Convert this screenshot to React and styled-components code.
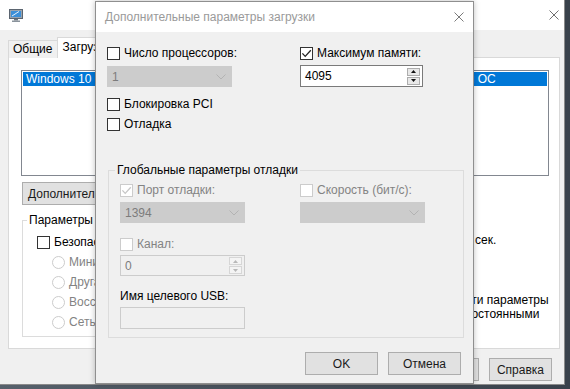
import React from "react";
import styled, { createGlobalStyle } from "styled-components";

const GlobalStyle = createGlobalStyle`
    html, body {
        margin: 0;
        padding: 0;
    }

    body {
        background: #3d454f;
        color: #000;
        font-family: "Liberation Sans", Arial, sans-serif;
        font-size: 12px;
    }
`;

const Desktop = styled.div`
    background: linear-gradient(90deg, #56606b, #39414b);
    height: 389px;
    overflow: hidden;
    position: relative;
    width: 570px;
`;

/* ---------- shared controls ---------- */

const Box = styled.span`
    align-items: center;
    background: #fff;
    border: 1px solid ${props => (props.$disabled ? "#cccccc" : "#333333")};
    box-sizing: border-box;
    display: inline-flex;
    flex: none;
    height: 13px;
    justify-content: center;
    width: 13px;
`;

const CheckRow = styled.label`
    align-items: center;
    color: ${props => (props.$disabled ? "#838383" : "#000")};
    display: flex;
    gap: 4px;
    height: 13px;
    line-height: 13px;
    margin-top: ${props => props.$top || 0}px;
    white-space: nowrap;
`;

const Checkbox = ({ checked, disabled, top, children }) => (
    <CheckRow $disabled={disabled} $top={top}>
        <Box $disabled={disabled}>
            {checked && (
                <svg width="11" height="11" viewBox="0 0 11 11">
                    <path
                        d="M1.4 5.4 L4.2 8.4 L9.8 2.2"
                        fill="none"
                        stroke={disabled ? "#c6c6c6" : "#222"}
                        strokeWidth="1.3"
                    />
                </svg>
            )}
        </Box>
        <span>{children}</span>
    </CheckRow>
);

const RadioCircle = styled.span`
    background: #fff;
    border: 1px solid #cccccc;
    border-radius: 50%;
    box-sizing: border-box;
    flex: none;
    height: 13px;
    width: 13px;
`;

const Radio = ({ children }) => (
    <CheckRow $disabled>
        <RadioCircle />
        <span>{children}</span>
    </CheckRow>
);

const Select = styled.div`
    align-items: center;
    background: #cccccc;
    border: 1px solid #cccccc;
    box-sizing: border-box;
    color: #7c7c7c;
    display: flex;
    height: 21px;
    justify-content: space-between;
    margin-top: ${props => props.$top || 0}px;
    padding: 0 5px 0 4px;
    width: 125px;
`;

const Chevron = () => (
    <svg width="10" height="6" viewBox="0 0 10 6">
        <path d="M0.5 0.5 L5 5 L9.5 0.5" fill="none" stroke="#b3b3b3" strokeWidth="1" />
    </svg>
);

const Field = styled.div`
    align-items: center;
    background: ${props => (props.$disabled ? "#f0f0f0" : "#fff")};
    border: 1px solid ${props => (props.$disabled ? "#cccccc" : "#7a7a7a")};
    box-sizing: border-box;
    color: ${props => (props.$disabled ? "#7c7c7c" : "#000")};
    display: flex;
    flex: none;
    height: ${props => props.$height || 21}px;
    justify-content: space-between;
    margin-top: ${props => props.$top || 0}px;
    padding: 0 2px 0 4px;
    width: ${props => props.$width || 125}px;
`;

const Spinner = styled.div`
    display: flex;
    flex-direction: column;
    gap: 1px;
`;

const SpinButton = styled.span`
    align-items: center;
    background: ${props => (props.$disabled ? "#f4f4f4" : "#e8e8e8")};
    border: 1px solid ${props => (props.$disabled ? "#d6d6d6" : "#adadad")};
    box-sizing: border-box;
    display: flex;
    height: 8px;
    justify-content: center;
    width: 13px;
`;

const Arrow = ({ up, disabled }) => (
    <svg width="5" height="3" viewBox="0 0 5 3">
        <path d={up ? "M0 3 L2.5 0 L5 3 Z" : "M0 0 L2.5 3 L5 0 Z"} fill={disabled ? "#b8b8b8" : "#111"} />
    </svg>
);

const SpinField = ({ value, disabled, top, width, height }) => (
    <Field $disabled={disabled} $top={top} $width={width} $height={height}>
        <span>{value}</span>
        <Spinner>
            <SpinButton $disabled={disabled}>
                <Arrow up disabled={disabled} />
            </SpinButton>
            <SpinButton $disabled={disabled}>
                <Arrow disabled={disabled} />
            </SpinButton>
        </Spinner>
    </Field>
);

const Button = styled.button`
    background: #e1e1e1;
    border: 1px solid #adadad;
    box-sizing: border-box;
    color: #1a1a1a;
    font: inherit;
    height: 23px;
    padding: 0 5px;
    width: ${props => (props.$width ? `${props.$width}px` : "auto")};
`;

const CloseIcon = ({ color = "#7a7a7a" }) => (
    <svg width="10" height="10" viewBox="0 0 10 10">
        <path d="M0.5 0.5 L9.5 9.5 M9.5 0.5 L0.5 9.5" stroke={color} strokeWidth="1" />
    </svg>
);

const GroupBox = styled.fieldset`
    border: 1px solid #dcdcdc;
    box-sizing: border-box;
    flex: none;
    margin: ${props => props.$margin || 0};
    min-width: 0;
    padding: ${props => props.$padding || "0 11px 8px"};
    width: ${props => props.$width}px;
`;

const Legend = styled.legend`
    line-height: 15px;
    margin-left: ${props => props.$shift || -5}px;
    padding: 0 2px;
`;

/* ---------- background window: msconfig ---------- */

const BackWindow = styled.div`
    background: #f0f0f0;
    border-bottom: 1px solid #8a8a8a;
    border-right: 1px solid #8a8a8a;
    box-sizing: border-box;
    display: flex;
    flex-direction: column;
    height: 385px;
    width: 565px;
`;

const BackTitle = styled.div`
    align-items: center;
    background: #fff;
    display: flex;
    flex: none;
    height: 30px;
    justify-content: space-between;
    padding: 0 5px 0 9px;
`;

const BackBody = styled.div`
    padding: 7px 0 0 8px;
`;

const Tabs = styled.div`
    align-items: flex-end;
    display: flex;
    height: 21px;
    margin-bottom: -1px;
    position: relative;
    z-index: 1;
`;

const Tab = styled.div`
    background: ${props => (props.$active ? "#fff" : "#f0f0f0")};
    border: 1px solid #d9d9d9;
    border-bottom: none;
    box-sizing: border-box;
    height: ${props => (props.$active ? 21 : 18)}px;
    line-height: ${props => (props.$active ? 19 : 17)}px;
    margin-left: ${props => (props.$active ? -1 : 0)}px;
    padding: 0 5px 0 4px;
`;

const TabPanel = styled.div`
    background: #fff;
    border: 1px solid #d9d9d9;
    box-sizing: border-box;
    height: 292px;
    padding: 12px 0 0 12px;
    width: 552px;
`;

const ListBox = styled.div`
    border: 1px solid #828790;
    box-sizing: border-box;
    height: 106px;
    padding: 1px;
    width: 528px;
`;

const ListRow = styled.div`
    background: #0078d7;
    color: #fff;
    height: 14px;
    line-height: 14px;
    overflow: hidden;
    padding-left: 3px;
    white-space: nowrap;
`;

const AdvancedRow = styled.div`
    margin: 6px 0 0 1px;
`;

const LowerArea = styled.div`
    display: flex;
`;

const GroupList = styled.div`
    display: flex;
    flex-direction: column;
    gap: 7px;
    padding-top: 8px;
`;

const RadioList = styled.div`
    display: flex;
    flex-direction: column;
    gap: 7px;
    padding: 0 0 1px 15px;
`;

const Timeout = styled.div`
    display: flex;
    flex: none;
    flex-direction: column;
    margin-left: 78px;
    padding-top: 6px;
    width: 159px;
`;

const TimeoutRow = styled.div`
    align-items: center;
    display: flex;
    gap: 5px;
    margin: 4px 0 0 10px;
`;

const Persist = styled.label`
    display: flex;
    gap: 4px;
    line-height: 14px;
    margin: 43px 0 0 -2px;
    width: 158px;
`;

const BackFooter = styled.div`
    display: flex;
    gap: 10px;
    justify-content: flex-end;
    margin-top: 9px;
    padding-right: 12px;
`;

const AppIcon = () => (
    <svg width="14" height="13" viewBox="0 0 14 13">
        <rect x="0.5" y="0.5" width="13" height="9" fill="#9aa3ad" stroke="#5b6570" />
        <rect x="2" y="2" width="10" height="6" fill="#3c8fd8" />
        <path d="M3 7 L10 2.5" stroke="#e8f2fb" strokeWidth="1" />
        <rect x="5" y="10" width="4" height="1.5" fill="#6b7580" />
        <rect x="3" y="11.5" width="8" height="1.5" fill="#8a939c" />
    </svg>
);

const Msconfig = () => (
    <BackWindow>
        <BackTitle>
            <AppIcon />
            <CloseIcon color="#6f6f6f" />
        </BackTitle>
        <BackBody>
            <Tabs>
                <Tab>Общие</Tab>
                <Tab $active>Загрузка</Tab>
                <Tab>Службы</Tab>
            </Tabs>
            <TabPanel>
                <ListBox>
                    <ListRow>Windows 10 (C:\WINDOWS) : Текущая ОС; Загружаемая по умолчанию активная ОС</ListRow>
                </ListBox>
                <AdvancedRow>
                    <Button>Дополнительные параметры...</Button>
                </AdvancedRow>
                <LowerArea>
                    <GroupBox $width={300} $margin="8px 0 0 1px" $padding="0 14px 6px">
                        <Legend $shift={-10}>Параметры загрузки</Legend>
                        <GroupList>
                            <Checkbox>Безопасный режим</Checkbox>
                            <RadioList>
                                <Radio>Минимальная загрузка</Radio>
                                <Radio>Другая оболочка</Radio>
                                <Radio>Восстановление Active Directory</Radio>
                                <Radio>Сеть</Radio>
                            </RadioList>
                        </GroupList>
                    </GroupBox>
                    <Timeout>
                        <span>Таймаут:</span>
                        <TimeoutRow>
                            <Field $width={60}>30</Field>
                            <span>сек.</span>
                        </TimeoutRow>
                        <Persist>
                            <Box />
                            <span>Сделать эти параметры загрузки постоянными</span>
                        </Persist>
                    </Timeout>
                </LowerArea>
            </TabPanel>
            <BackFooter>
                <Button $width={75}>ОК</Button>
                <Button $width={75}>Отмена</Button>
                <Button $width={75}>Применить</Button>
                <Button $width={63}>Справка</Button>
            </BackFooter>
        </BackBody>
    </BackWindow>
);

/* ---------- foreground dialog ---------- */

const Dialog = styled.div`
    background: #f0f0f0;
    border: 1px solid #8f8f8f;
    box-shadow: 0 0 6px rgba(0, 0, 0, 0.25);
    box-sizing: border-box;
    display: flex;
    flex-direction: column;
    height: 383px;
    left: 95px;
    position: absolute;
    top: 1px;
    width: 379px;
    z-index: 5;
`;

const DialogTitle = styled.div`
    align-items: center;
    background: #fff;
    color: #9a9a9a;
    display: flex;
    flex: none;
    height: 30px;
    justify-content: space-between;
    padding: 0 9px 0 9px;
`;

const DialogBody = styled.div`
    display: flex;
    flex-direction: column;
    padding: 15px 12px 0 11px;
`;

const TopGrid = styled.div`
    display: grid;
    grid-template-columns: 193px 1fr;
`;

const Column = styled.div`
    display: flex;
    flex-direction: column;
`;

const DebugGrid = styled.div`
    display: grid;
    grid-template-columns: 180px 1fr;
    padding-top: 6px;
`;

const PlainLabel = styled.div`
    line-height: 15px;
    margin-top: ${props => props.$top || 0}px;
`;

const DialogFooter = styled.div`
    display: flex;
    gap: 10px;
    justify-content: flex-end;
    margin-top: 14px;
`;

const AdvancedDialog = () => (
    <Dialog>
        <DialogTitle>
            <span>Дополнительные параметры загрузки</span>
            <CloseIcon />
        </DialogTitle>
        <DialogBody>
            <TopGrid>
                <Column>
                    <Checkbox>Число процессоров:</Checkbox>
                    <Select $top={6}>
                        <span>1</span>
                        <Chevron />
                    </Select>
                    <Checkbox top={11}>Блокировка PCI</Checkbox>
                    <Checkbox top={7}>Отладка</Checkbox>
                </Column>
                <Column>
                    <Checkbox checked>Максимум памяти:</Checkbox>
                    <SpinField value="4095" top={5} width={123} height={22} />
                </Column>
            </TopGrid>
            <GroupBox $width={356} $margin="32px 0 0 1px">
                <Legend>Глобальные параметры отладки</Legend>
                <DebugGrid>
                    <Column>
                        <Checkbox checked disabled>Порт отладки:</Checkbox>
                        <Select $top={5}>
                            <span>1394</span>
                            <Chevron />
                        </Select>
                        <Checkbox disabled top={15}>Канал:</Checkbox>
                        <SpinField value="0" disabled top={4} />
                        <PlainLabel $top={13}>Имя целевого USB:</PlainLabel>
                        <Field $disabled $top={3} $height={22} />
                    </Column>
                    <Column>
                        <Checkbox disabled>Скорость (бит/с):</Checkbox>
                        <Select $top={5}>
                            <span />
                            <Chevron />
                        </Select>
                    </Column>
                </DebugGrid>
            </GroupBox>
            <DialogFooter>
                <Button $width={73}>OK</Button>
                <Button $width={73}>Отмена</Button>
            </DialogFooter>
        </DialogBody>
    </Dialog>
);

const App = () => (
    <>
        <GlobalStyle />
        <Desktop>
            <Msconfig />
            <AdvancedDialog />
        </Desktop>
    </>
);

export default App;
